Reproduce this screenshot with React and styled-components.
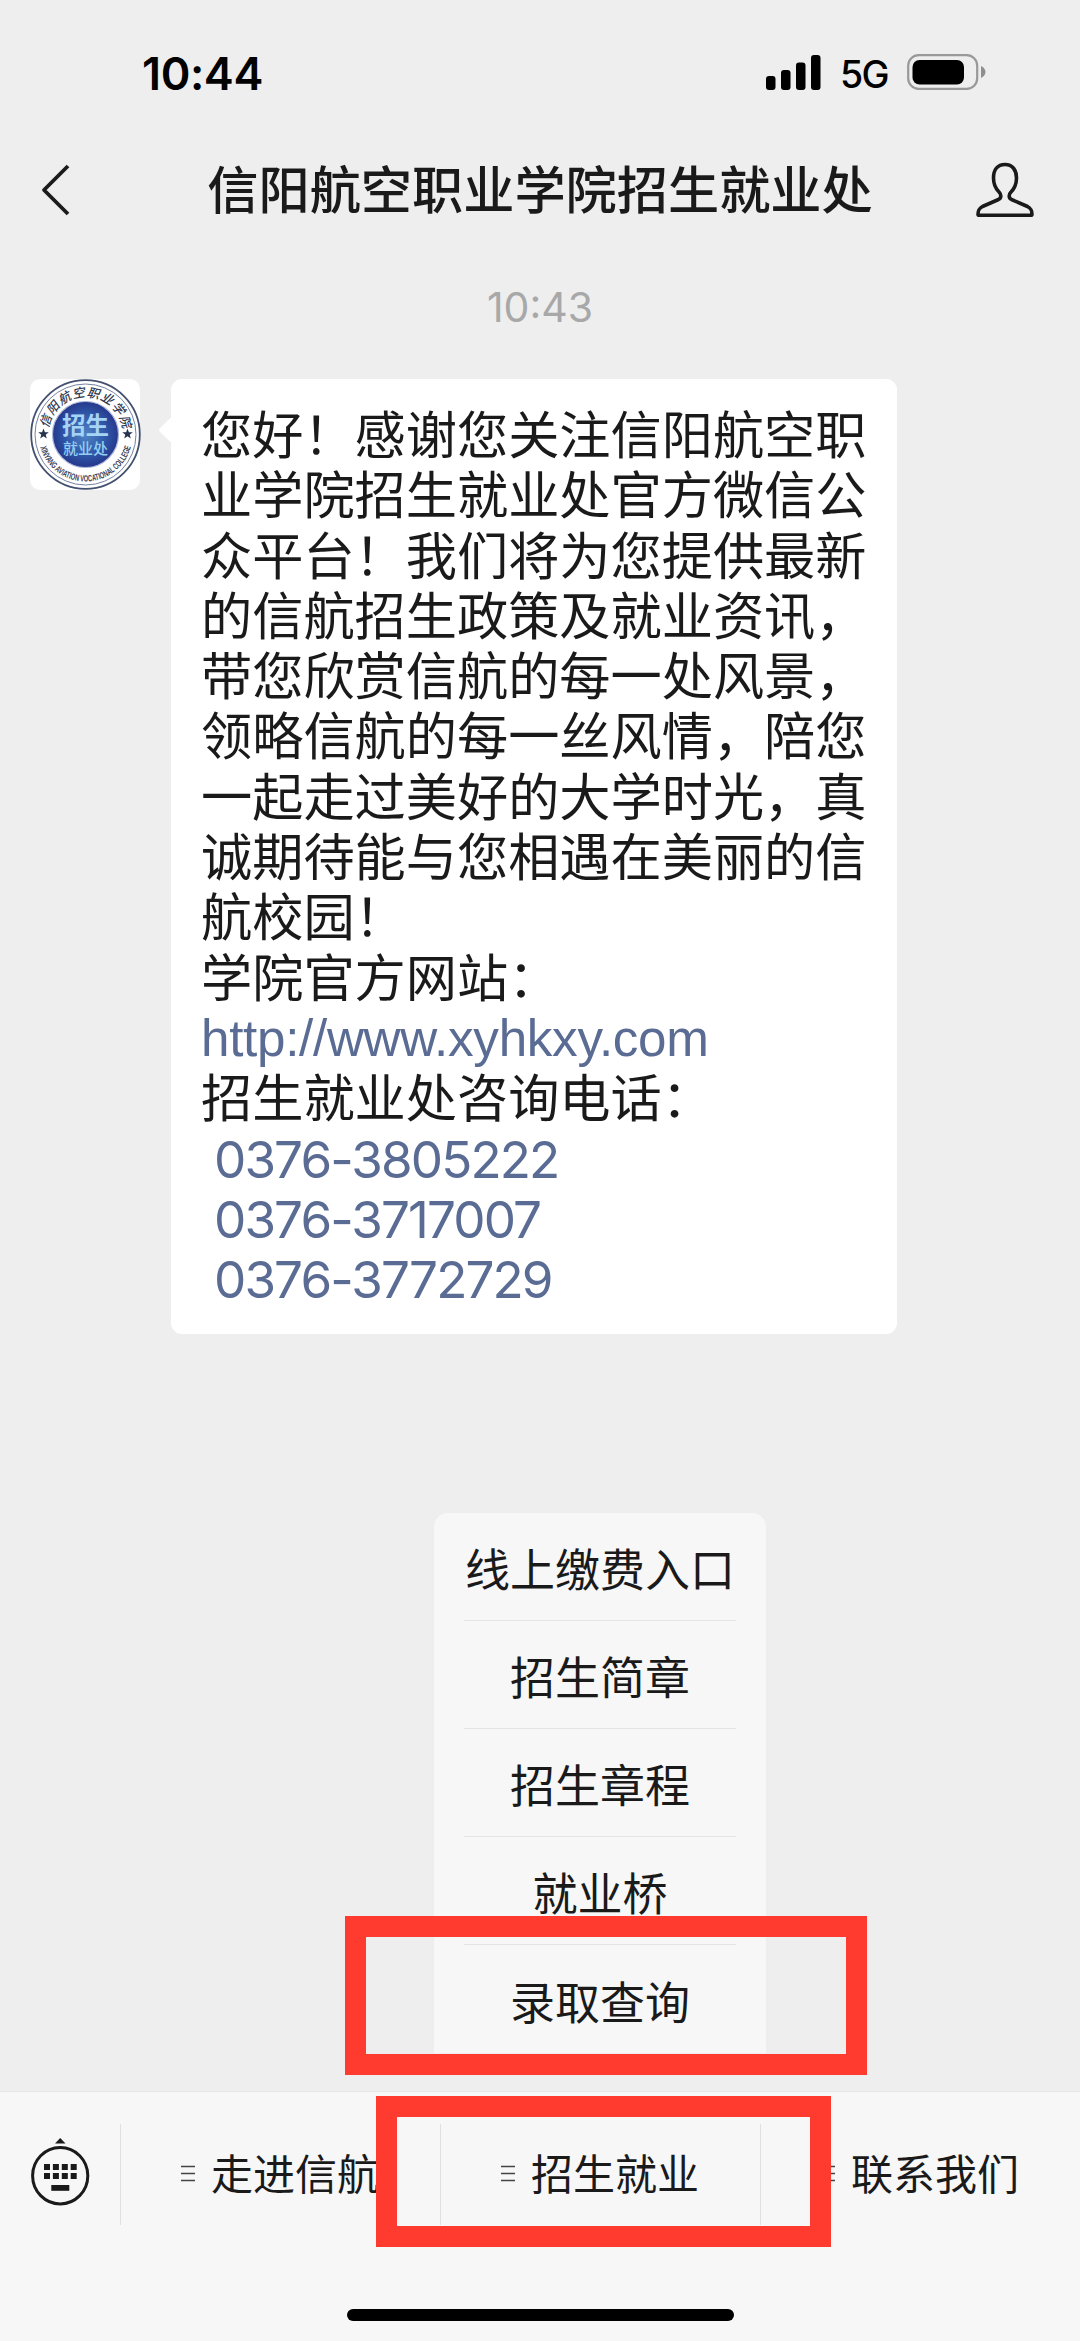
import React from 'react'
import styled, { createGlobalStyle } from 'styled-components'

const GlobalStyle = createGlobalStyle`
* {
    box-sizing: border-box;
}
body {
    margin: 0;
    background: #eee;
    font-family: Inter, "Noto Sans CJK SC", sans-serif;
    color: #1a1a1a;
}
`;

const Screen = styled.div`
position: relative;
display: flex;
flex-direction: column;
width: 1080px;
height: 2341px;
background: #eee;
overflow: hidden;
`;

const StatusBar = styled.div`
display: flex;
align-items: center;
justify-content: space-between;
height: 100px;
padding: 44px 94px 0 142px;
color: #000;
`;

const Clock = styled.div`
font-size: 45px;
font-weight: 600;
line-height: 56px;
letter-spacing: -0.4px;
padding-top: 3px;
`;

const StatusIcons = styled.div`
display: flex;
align-items: center;
height: 56px;
`;

const Network = styled.span`
width: 48px;
margin: 0 19px 0 18px;
padding-top: 4px;
font-size: 37.5px;
font-weight: 450;
letter-spacing: -1.6px;
white-space: nowrap;
`;

const NavBar = styled.div`
display: flex;
align-items: center;
height: 180px;
padding: 0 46px 0 40px;
`;

const Title = styled.h1`
flex: 1;
margin: 0 0 0 32px;
font-size: 51.2px;
font-weight: 500;
line-height: 60px;
text-align: center;
`;

const Chat = styled.div`
flex: 1;
`;

const TimeStamp = styled.div`
height: 99px;
padding-top: 2px;
font-size: 41px;
line-height: 50px;
text-align: center;
color: #a8a8a8;
`;

const Message = styled.div`
display: flex;
align-items: flex-start;
gap: 31px;
padding-left: 30px;
`;

const Avatar = styled.div`
width: 110px;
height: 111px;
border-radius: 10px;
background: #fff;

svg {
    display: block;
    overflow: visible;
}
`;

const Bubble = styled.div`
position: relative;
width: 726px;
height: 955px;
padding: 26px 28px 0 30px;
border-radius: 11px;
background: #fff;
font-size: 51.2px;
line-height: 60.3px;

&::before {
    content: '';
    position: absolute;
    left: -9px;
    top: 42px;
    width: 18px;
    height: 18px;
    border-radius: 2px;
    background: #fff;
    transform: rotate(45deg);
}

p {
    margin: 0;
}
`;

const Link = styled.a`
display: block;
height: 60.3px;
color: #5a6c94;
white-space: nowrap;
`;

const WebLink = styled(Link)`
font-family: "Liberation Sans", sans-serif;
line-height: 62.3px;
letter-spacing: -0.3px;
`;

const PhoneLink = styled(Link)`
padding-left: 13px;
letter-spacing: -1.9px;
`;

const Menu = styled.div`
position: absolute;
left: 434px;
top: 1513px;
width: 332px;
padding: 0 30px;
border-radius: 14px 14px 0 0;
background: #f7f7f7;
`;

const MenuItem = styled.div`
display: flex;
align-items: center;
justify-content: center;
height: 108px;
padding-top: 2px;
border-bottom: ${(props) => (props.$last ? 'none' : '1px solid #e4e4e4')};
font-size: 45px;
white-space: nowrap;
`;

const BottomBar = styled.div`
height: 250px;
border-top: 1px solid #e6e6e6;
background: #f7f7f7;
`;

const Tabs = styled.div`
display: flex;
align-items: center;
height: 164px;
`;

const KeyboardButton = styled.div`
width: 120px;
padding: 0 0 4px 30px;

svg {
    display: block;
}
`;

const Tab = styled.div`
display: flex;
align-items: center;
gap: 16px;
width: 320px;
height: 101px;
padding-left: 60px;
border-left: 1px solid #e0e0e0;
font-size: 42px;
white-space: nowrap;

span {
    padding-bottom: 6px;
}
`;

const HomeIndicator = styled.div`
width: 387px;
height: 12px;
margin: 53px auto 0;
border-radius: 6px;
background: #000;
`;

const Highlight = styled.div`
position: absolute;
left: ${(props) => props.$x}px;
top: ${(props) => props.$y}px;
width: ${(props) => props.$w}px;
height: ${(props) => props.$h}px;
border: 21px solid #ff3a2f;
`;

const menuItems = ['线上缴费入口', '招生简章', '招生章程', '就业桥', '录取查询']
const tabs = ['走进信航', '招生就业', '联系我们']
const phones = ['0376-3805222', '0376-3717007', '0376-3772729']

function Signal() {
    return (
        <svg width="56" height="36" viewBox="0 0 56 36">
            <rect x="0" y="22" width="9.5" height="14" rx="3" />
            <rect x="15" y="16" width="9.5" height="20" rx="3" />
            <rect x="30" y="8.5" width="9.5" height="27.5" rx="3" />
            <rect x="45" y="1" width="9.5" height="35" rx="3" />
        </svg>
    )
}

function Battery() {
    return (
        <svg width="79" height="36" viewBox="0 0 79 36">
            <rect x="1.2" y="1.2" width="69" height="33.6" rx="10.5" fill="none" stroke="#999" strokeWidth="2.2" />
            <rect x="5.5" y="6" width="51.5" height="24.5" rx="7" />
            <path d="M74 12 Q78.5 14.5 78.5 18 T74 24 Z" fill="#8e8e8e" />
        </svg>
    )
}

function BackIcon() {
    return (
        <svg width="32" height="52" viewBox="0 0 32 52">
            <path d="M28 2 L4 26 L28 50" fill="none" stroke="#1a1a1a" strokeWidth="3.8" strokeLinejoin="round" />
        </svg>
    )
}

function PersonIcon() {
    return (
        <svg width="58" height="56" viewBox="0 0 58 56">
            <path
                d="M29 2.5 C21.5 2.5 17.5 8 17.5 16 C17.5 22.5 19.5 26.5 23 30 C25.5 32.5 25.5 36 22.5 37.5 L6.5 44.5 C3 46.5 2 48 2 52.2 Q2 53.2 3 53.2 L55 53.2 Q56 53.2 56 52.2 C56 48 55 46.5 51.5 44.5 L35.5 37.5 C32.5 36 32.5 32.5 35 30 C38.5 26.5 40.5 22.5 40.5 16 C40.5 8 36.5 2.5 29 2.5 Z"
                fill="none"
                stroke="#1a1a1a"
                strokeWidth="3.6"
                strokeLinejoin="round"
            />
        </svg>
    )
}

function KeyboardIcon() {
    return (
        <svg width="60" height="70" viewBox="0 0 60 70">
            <path d="M25 6.5 L30.2 1 L35.5 6.5 Z" fill="#1a1a1a" />
            <ellipse cx="30.2" cy="38.7" rx="27.6" ry="28.2" fill="none" stroke="#1a1a1a" strokeWidth="3" />
            {[0, 1, 2, 3].map((i) => (
                <g key={i} fill="#1a1a1a">
                    <rect x={14 + i * 8.9} y="27" width="6" height="6" />
                    <rect x={14 + i * 8.9} y="36" width="6" height="6" />
                </g>
            ))}
            <rect x="21.3" y="48" width="18" height="5.8" fill="#1a1a1a" />
        </svg>
    )
}

function ListIcon() {
    return (
        <svg width="14" height="18" viewBox="0 0 14 18">
            <path d="M0 1.5 H14 M0 8.5 H14 M0 15.5 H14" stroke="#444" strokeWidth="1.3" />
        </svg>
    )
}

function Star({ x }) {
    return (
        <path
            transform={`translate(${x} 55)`}
            d="M0 -5.5 L1.4 -1.7 L5.3 -1.7 L2.2 0.7 L3.3 4.5 L0 2.2 L-3.3 4.5 L-2.2 0.7 L-5.3 -1.7 L-1.4 -1.7 Z"
            fill="#27324f"
        />
    )
}

function Logo() {
    return (
        <svg width="111" height="111" viewBox="0 0 111 111">
            <defs>
                <radialGradient id="core">
                    <stop offset="0" stopColor="#4f83c4" />
                    <stop offset="0.6" stopColor="#3059aa" />
                    <stop offset="1" stopColor="#26388c" />
                </radialGradient>
                <path id="arcTop" d="M18 55.5 A37.5 37.5 0 0 1 93 55.5" />
                <path id="arcBottom" d="M8.5 55.5 A47 47 0 0 0 102.5 55.5" />
            </defs>
            <circle cx="55.5" cy="55.5" r="54.3" fill="#fff" stroke="#43506f" strokeWidth="1.8" />
            <circle cx="55.5" cy="55.5" r="50.5" fill="none" stroke="#7482a0" strokeWidth="1" />
            <circle cx="55.5" cy="55.5" r="33" fill="url(#core)" stroke="#aab6da" strokeWidth="1.2" />
            <text fontSize="12.5" fontStyle="italic" fontWeight="500" fill="#303850">
                <textPath href="#arcTop" startOffset="6" textLength="106">信阳航空职业学院</textPath>
            </text>
            <text fontSize="9" fontFamily='"Liberation Sans", sans-serif' fontWeight="bold" fill="#3a4258">
                <textPath href="#arcBottom" startOffset="13" textLength="122" lengthAdjust="spacingAndGlyphs">XINYANG AVIATION VOCATIONAL COLLEGE</textPath>
            </text>
            <Star x={13.5} />
            <Star x={97.5} />
            <text x="55.5" y="54.5" textAnchor="middle" fontSize="23.5" fontWeight="700" fill="#a6d4f4">招生</text>
            <text x="55.5" y="74.5" textAnchor="middle" fontSize="15" fontWeight="500" fill="#94cdf0">就业处</text>
        </svg>
    )
}

export default function App() {
    return (
        <Screen lang="zh-CN">
            <GlobalStyle />
            <StatusBar>
                <Clock>10:44</Clock>
                <StatusIcons>
                    <Signal />
                    <Network>5G</Network>
                    <Battery />
                </StatusIcons>
            </StatusBar>
            <NavBar>
                <BackIcon />
                <Title>信阳航空职业学院招生就业处</Title>
                <PersonIcon />
            </NavBar>
            <Chat>
                <TimeStamp>10:43</TimeStamp>
                <Message>
                    <Avatar>
                        <Logo />
                    </Avatar>
                    <Bubble>
                        <p>您好！感谢您关注信阳航空职业学院招生就业处官方微信公众平台！我们将为您提供最新的信航招生政策及就业资讯，带您欣赏信航的每一处风景，领略信航的每一丝风情，陪您一起走过美好的大学时光，真诚期待能与您相遇在美丽的信航校园！</p>
                        <p>学院官方网站：</p>
                        <WebLink>http://www.xyhkxy.com</WebLink>
                        <p>招生就业处咨询电话：</p>
                        {phones.map((phone) => (
                            <PhoneLink key={phone}>{phone}</PhoneLink>
                        ))}
                    </Bubble>
                </Message>
            </Chat>
            <BottomBar>
                <Tabs>
                    <KeyboardButton>
                        <KeyboardIcon />
                    </KeyboardButton>
                    {tabs.map((tab) => (
                        <Tab key={tab}>
                            <ListIcon />
                            <span>{tab}</span>
                        </Tab>
                    ))}
                </Tabs>
                <HomeIndicator />
            </BottomBar>
            <Menu>
                {menuItems.map((item, i) => (
                    <MenuItem key={item} $last={i === menuItems.length - 1}>{item}</MenuItem>
                ))}
            </Menu>
            <Highlight $x={345} $y={1916} $w={522} $h={159} />
            <Highlight $x={376} $y={2096} $w={455} $h={151} />
        </Screen>
    )
}
